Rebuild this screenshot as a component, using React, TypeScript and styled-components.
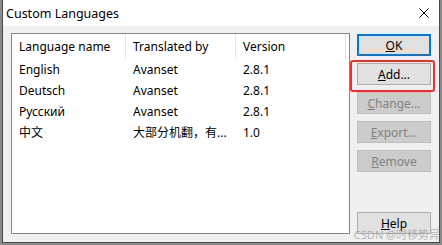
import * as React from "react";
import styled, { createGlobalStyle } from "styled-components";

const GlobalStyle = createGlobalStyle`
  html, body {
    margin: 0;
    padding: 0;
    background: #8a8a8a;
  }
  body {
    font-family: "Noto Sans", "Noto Sans CJK SC", sans-serif;
    font-size: 12px;
    color: #000;
  }
`;

const Page = styled.div`
  width: 442px;
  height: 245px;
  padding-left: 2px;
  box-sizing: border-box;
  overflow: hidden;
`;

const Window = styled.div`
  width: 438px;
  height: 243px;
  box-sizing: border-box;
  border: 1px solid #4a4a4a;
  border-top: none;
  background: #f0f0f0;
  display: flex;
  flex-direction: column;
`;

const TitleBar = styled.div`
  height: 26px;
  flex: none;
  background: #fff;
  display: flex;
  align-items: center;
  justify-content: space-between;
  padding: 0 10px 0 3px;
`;

const Title = styled.span`
  font-size: 12.5px;
`;

const CloseIcon = () => (
  <svg width="10" height="10" viewBox="0 0 10 10">
    <path d="M0.5 0.5 L9.5 9.5 M9.5 0.5 L0.5 9.5" stroke="#000" strokeWidth="1" fill="none" />
  </svg>
);

const Client = styled.div`
  flex: 1;
  display: flex;
  gap: 7px;
  padding: 7px 8px 8px 8px;
  min-height: 0;
`;

const ListBox = styled.div`
  flex: 1;
  background: #fff;
  border: 1px solid #828790;
`;

const Grid = styled.div`
  display: grid;
  grid-template-columns: 114px 110px 110px;
`;

const HeadCell = styled.div`
  height: 25px;
  line-height: 25px;
  padding-left: 7px;
  border-right: 1px solid #e5e5e5;
  white-space: nowrap;
`;

const Cell = styled.div`
  height: 21px;
  line-height: 21px;
  padding-left: 7px;
  white-space: nowrap;
  overflow: hidden;
`;

const Buttons = styled.div`
  width: 74px;
  display: flex;
  flex-direction: column;
  gap: 7px;
  padding-top: 1px;
`;

const Button = styled.div<{ $default?: boolean; $disabled?: boolean }>`
  position: relative;
  height: 22px;
  box-sizing: border-box;
  display: flex;
  align-items: center;
  justify-content: center;
  background: ${(p) => (p.$disabled ? "#cccccc" : "#e1e1e1")};
  border: ${(p) => (p.$default ? "2px solid #0078d7" : p.$disabled ? "1px solid #bfbfbf" : "1px solid #adadad")};
  color: ${(p) => (p.$disabled ? "#838383" : "#000")};
  &:last-child {
    margin-top: auto;
  }
`;

const Highlight = styled.div`
  position: absolute;
  left: -8px;
  right: -5px;
  top: -4px;
  bottom: -8px;
  border: 2px solid #f22b2b;
  border-radius: 3px;
`;

const Watermark = styled.div`
  position: absolute;
  right: 2px;
  bottom: 4px;
  font-size: 11px;
  line-height: 12px;
  color: rgba(160, 160, 160, 0.75);
  white-space: nowrap;
`;

const Wrap = styled.div`
  position: relative;
`;

const rows = [
  ["English", "Avanset", "2.8.1"],
  ["Deutsch", "Avanset", "2.8.1"],
  ["Русский", "Avanset", "2.8.1"],
  ["中文", "大部分机翻，有...", "1.0"],
];

export default function App() {
  return (
    <Wrap>
      <GlobalStyle />
      <Page>
        <Window>
          <TitleBar>
            <Title>Custom Languages</Title>
            <CloseIcon />
          </TitleBar>
          <Client>
            <ListBox>
              <Grid>
                <HeadCell>Language name</HeadCell>
                <HeadCell>Translated by</HeadCell>
                <HeadCell>Version</HeadCell>
                {rows.map((r, i) =>
                  r.map((c, j) => <Cell key={`${i}-${j}`}>{c}</Cell>)
                )}
              </Grid>
            </ListBox>
            <Buttons>
              <Button $default>
                <span><u>O</u>K</span>
              </Button>
              <Button>
                <span><u>A</u>dd...</span>
                <Highlight />
              </Button>
              <Button $disabled>
                <span><u>C</u>hange...</span>
              </Button>
              <Button $disabled>
                <span><u>E</u>xport...</span>
              </Button>
              <Button $disabled>
                <span><u>R</u>emove</span>
              </Button>
              <Button>
                <span><u>H</u>elp</span>
              </Button>
            </Buttons>
          </Client>
        </Window>
      </Page>
      <Watermark>CSDN @时移势异</Watermark>
    </Wrap>
  );
}
